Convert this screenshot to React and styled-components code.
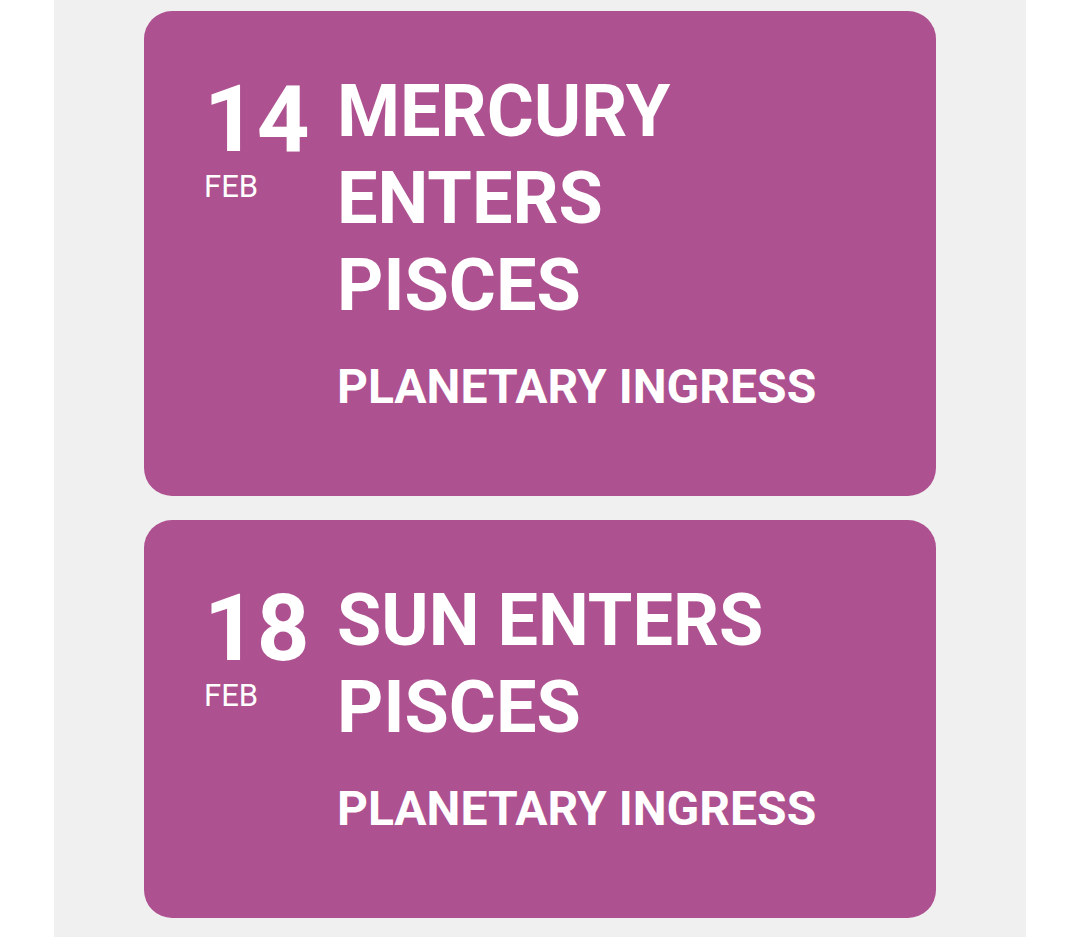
import React from 'react';
import styled, { createGlobalStyle } from 'styled-components';

const GlobalStyle = createGlobalStyle`
  html, body {
    margin: 0;
    padding: 0;
    background: #ffffff;
    font-family: Roboto, "Noto Sans", "Liberation Sans", sans-serif;
  }
`;

const Page = styled.div`
  width: 1080px;
  min-height: 937px;
  display: flex;
  justify-content: center;
`;

const Column = styled.main`
  width: 972px;
  min-height: 937px;
  background: #f0f0f0;
  padding: 11px 90px 0;
  box-sizing: border-box;
  display: flex;
  flex-direction: column;
  gap: 24px;
`;

const Card = styled.article`
  background: #ae5190;
  border-radius: 28px;
  color: #ffffff;
  display: flex;
  padding: 56px 40px 81px 60px;
`;

const DateBlock = styled.div`
  width: 133px;
  flex-shrink: 0;
  display: flex;
  flex-direction: column;
  padding-top: 7px;
`;

const Day = styled.div`
  font-size: 92px;
  font-weight: 700;
  line-height: 92px;
`;

const Month = styled.div`
  font-size: 31px;
  font-weight: 400;
  line-height: 36px;
  margin-top: 3px;
`;

const Body = styled.div`
  display: flex;
  flex-direction: column;
  padding-top: 1px;
`;

const Title = styled.h2`
  margin: 0;
  font-size: 72px;
  font-weight: 700;
  line-height: 87px;
`;

const Kind = styled.div`
  margin-top: 30px;
  font-size: 48px;
  font-weight: 700;
  line-height: 56px;
`;

const events = [
  { day: '14', month: 'FEB', title: ['MERCURY', 'ENTERS', 'PISCES'], kind: 'PLANETARY INGRESS' },
  { day: '18', month: 'FEB', title: ['SUN ENTERS', 'PISCES'], kind: 'PLANETARY INGRESS' },
];

export default function App() {
  return (
    <Page>
      <GlobalStyle />
      <Column>
        {events.map((ev) => (
          <Card key={ev.day}>
            <DateBlock>
              <Day>{ev.day}</Day>
              <Month>{ev.month}</Month>
            </DateBlock>
            <Body>
              <Title>
                {ev.title.map((line, i) => (
                  <React.Fragment key={i}>
                    {line}
                    {i < ev.title.length - 1 && <br />}
                  </React.Fragment>
                ))}
              </Title>
              <Kind>{ev.kind}</Kind>
            </Body>
          </Card>
        ))}
      </Column>
    </Page>
  );
}
